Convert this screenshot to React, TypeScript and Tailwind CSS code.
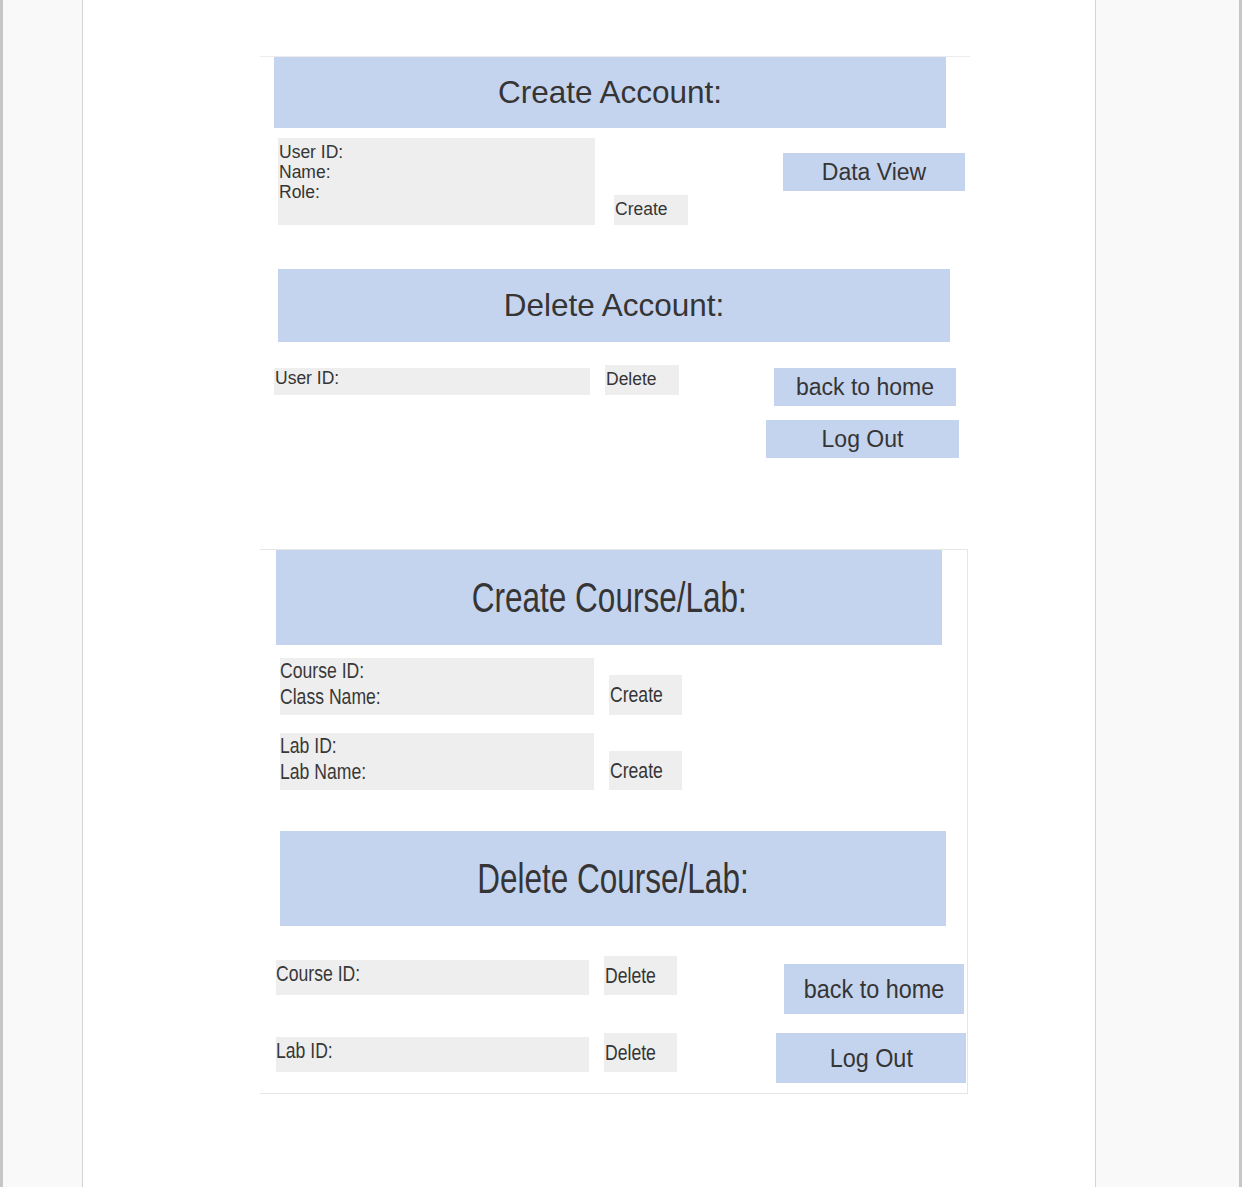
const font = { fontFamily: '"Liberation Sans", Arial, sans-serif' }

function Header({ title, className, narrow }: { title: string; className: string; narrow?: boolean }) {
  return (
    <div className={`flex items-center justify-center bg-[#c5d4ee] text-[#353535] ${className}`}>
      {narrow ? (
        <span className="inline-block scale-x-[0.75] text-[42px] leading-none whitespace-nowrap">{title}</span>
      ) : (
        <span className="text-[31.5px] leading-none whitespace-nowrap">{title}</span>
      )}
    </div>
  )
}

function BlueButton({ label, className, narrow }: { label: string; className: string; narrow?: boolean }) {
  return (
    <div className={`flex shrink-0 items-center justify-center bg-[#c5d4ee] text-[#353535] ${className}`}>
      {narrow ? (
        <span className="inline-block scale-x-[0.9] text-[26px] leading-none whitespace-nowrap">{label}</span>
      ) : (
        <span className="text-[23px] leading-none whitespace-nowrap">{label}</span>
      )}
    </div>
  )
}

function GrayButton({ label, className, narrow }: { label: string; className: string; narrow?: boolean }) {
  return (
    <div className={`flex shrink-0 items-center bg-[#eeeeee] text-[#353535] ${className}`}>
      {narrow ? (
        <span className="ml-[1px] inline-block origin-left scale-x-[0.8] text-[22px] leading-none whitespace-nowrap">{label}</span>
      ) : (
        <span className="ml-[1px] text-[17.5px] leading-none whitespace-nowrap">{label}</span>
      )}
    </div>
  )
}

function AccountMock() {
  return (
    <section className="mt-[56px] w-[710px] border-t border-[#ececec]">
      <Header title="Create Account:" className="ml-[14px] h-[71px] w-[672px]" />

      <div className="mt-[10px] flex items-start">
        <div className="ml-[18px] h-[87px] w-[317px] shrink-0 bg-[#eeeeee] pl-[1px] pt-[4px] text-[17.5px] leading-[20px] text-[#353535]">
          <div>User ID:</div>
          <div>Name:</div>
          <div>Role:</div>
        </div>
        <GrayButton label="Create" className="ml-[19px] mt-[57px] h-[30px] w-[74px]" />
        <BlueButton label="Data View" className="ml-[95px] mt-[15px] h-[38px] w-[182px]" />
      </div>

      <Header title="Delete Account:" className="ml-[18px] mt-[44px] h-[73px] w-[672px]" />

      <div className="mt-[23px] flex items-start">
        <div className="ml-[14px] mt-[3px] h-[27px] w-[316px] shrink-0 bg-[#eeeeee] pl-[1px] text-[17.5px] leading-[20px] text-[#353535]">
          User ID:
        </div>
        <GrayButton label="Delete" className="ml-[15px] h-[30px] w-[74px]" />
        <div className="ml-[87px] flex flex-col">
          <BlueButton label="back to home" className="ml-[8px] mt-[3px] h-[38px] w-[182px]" />
          <BlueButton label="Log Out" className="mt-[14px] h-[38px] w-[193px]" />
        </div>
      </div>
    </section>
  )
}

function CourseMock() {
  return (
    <section className="mt-[91px] w-[708px] border-y border-r border-[#e6e6e6] pb-[10px]">
      <Header title="Create Course/Lab:" className="ml-[16px] h-[95px] w-[666px]" narrow />

      {[
        ["Course ID:", "Class Name:", "h-[40px]"],
        ["Lab ID:", "Lab Name:", "h-[39px]"],
      ].map(([a, b, h], i) => (
        <div key={a} className={`flex items-end ${i === 0 ? "mt-[13px]" : "mt-[18px]"}`}>
          <div className="ml-[20px] h-[57px] w-[314px] shrink-0 bg-[#eeeeee] text-[#383838]">
            <div className="inline-block origin-left scale-x-[0.8] text-[22px] leading-[26px] whitespace-nowrap">
              <div>{a}</div>
              <div>{b}</div>
            </div>
          </div>
          <GrayButton label="Create" className={`ml-[15px] w-[73px] ${h}`} narrow />
        </div>
      ))}

      <Header title="Delete Course/Lab:" className="ml-[20px] mt-[41px] h-[95px] w-[666px]" narrow />

      <div className="mt-[30px] flex items-start">
        <div className="ml-[16px] mt-[4px] h-[35px] w-[313px] shrink-0 bg-[#eeeeee] pt-[1px] text-[#383838]">
          <span className="inline-block origin-left scale-x-[0.8] text-[22px] leading-[26px] whitespace-nowrap">Course ID:</span>
        </div>
        <GrayButton label="Delete" className="ml-[15px] h-[39px] w-[73px]" narrow />
        <BlueButton label="back to home" className="ml-[107px] mt-[8px] h-[50px] w-[180px]" narrow />
      </div>

      <div className="mt-[19px] flex items-start">
        <div className="ml-[16px] mt-[4px] h-[35px] w-[313px] shrink-0 bg-[#eeeeee] pt-[1px] text-[#383838]">
          <span className="inline-block origin-left scale-x-[0.8] text-[22px] leading-[26px] whitespace-nowrap">Lab ID:</span>
        </div>
        <GrayButton label="Delete" className="ml-[15px] h-[39px] w-[73px]" narrow />
        <BlueButton label="Log Out" className="ml-[99px] h-[50px] w-[190px]" narrow />
      </div>
    </section>
  )
}

export default function App() {
  return (
    <div className="flex h-[1187px] w-[1242px] overflow-hidden bg-[#f9f9f9]" style={font}>
      <div className="w-[3px] shrink-0 bg-[#c6c6c6]" />
      <div className="w-[80px] shrink-0 border-r border-[#d4d4d4] bg-[#f9f9f9]" />
      <main className="flex w-[1012px] shrink-0 flex-col bg-white pl-[177px]">
        <AccountMock />
        <CourseMock />
      </main>
      <div className="flex-1 border-l border-[#d4d4d4] bg-[#f9f9f9]" />
      <div className="w-[3px] shrink-0 bg-[#c6c6c6]" />
    </div>
  )
}
